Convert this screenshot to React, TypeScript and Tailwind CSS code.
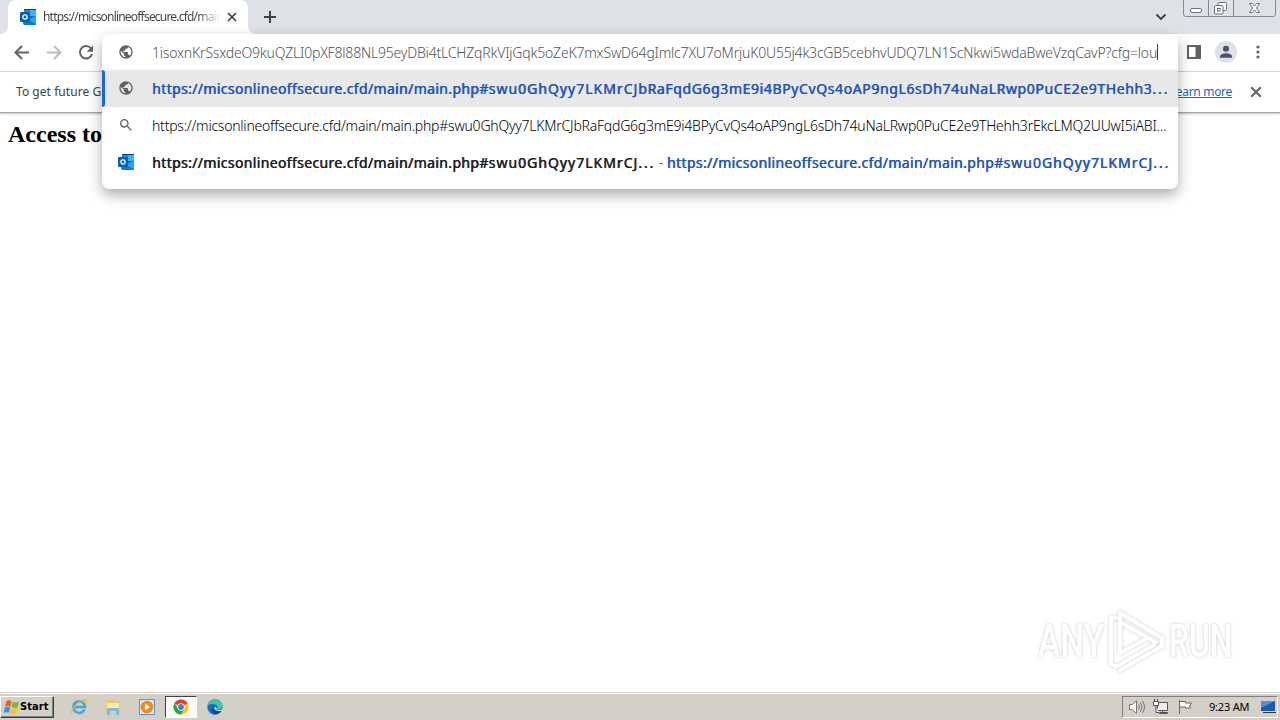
import type { ReactNode } from 'react';

const BASE = 'https://micsonlineoffsecure.cfd/main/main.php#';
const HASH_START = 'swu0GhQyy7LKMrCJ';
const HASH_REST = 'bRaFqdG6g3mE9i4BPyCvQs4oAP9ngL6sDh74uNaLRwp0PuCE2e9THehh3';
const TYPED =
	'1isoxnKrSsxdeO9kuQZLI0pXF8l88NL95eyDBi4tLCHZqRkVIjGqk5oZeK7mxSwD64gImlc7XU7oMrjuK0U55j4k3cGB5cebhvUDQ7LN1ScNkwi5wdaBweVzqCavP?cfg=lou';

const OutlookIcon = () => (
	<svg width="16" height="16" viewBox="0 0 16 16" className="shrink-0">
		<path fill="#0a3f91" d="M4 0h12v8H4z" />
		<path fill="#1490df" d="M4 1h6v6H4z" />
		<path fill="#35b8f1" d="M10 1h6v6h-6z" />
		<path fill="#0f78d4" d="M3 14V8l13-1v9H5a2 2 0 0 1-2-2z" />
		<path fill="#28a8ea" d="M16 7v8l-8-4z" />
		<rect y="3" width="10" height="10" rx="1" fill="#0a5eb5" />
		<circle cx="5" cy="8" r="2.100" fill="none" stroke="#fff" strokeWidth="1.300" />
	</svg>
);

const GlobeIcon = () => (
	<svg width="16" height="16" viewBox="0 0 24 24" fill="#5f6368" fillRule="evenodd" className="shrink-0">
		<path d="M12 2C6.480 2 2 6.480 2 12s4.480 10 10 10 10-4.480 10-10S17.520 2 12 2zm-1 17.930c-3.950-.49-7-3.850-7-7.930 0-.62.08-1.210.21-1.790L9 15v1c0 1.100.9 2 2 2v1.930zm6.900-2.540c-.26-.81-1-1.390-1.900-1.390h-1v-3c0-.55-.45-1-1-1H8v-2h2c.55 0 1-.45 1-1V7h2c1.100 0 2-.9 2-2v-.41c2.930 1.190 5 4.060 5 7.410 0 2.080-.8 3.970-2.100 5.390z" />
	</svg>
);

const SearchIcon = () => (
	<svg width="16" height="16" viewBox="0 0 24 24" fill="#5f6368" className="shrink-0">
		<path d="M15.500 14h-.79l-.28-.27A6.470 6.470 0 0 0 16 9.500 6.500 6.500 0 1 0 9.500 16c1.610 0 3.090-.59 4.230-1.570l.27.28v.79l5 4.990L20.490 19l-4.990-5zm-6 0C7.010 14 5 11.990 5 9.500S7.010 5 9.500 5 14 7.010 14 9.500 11.990 14 9.500 14z" />
	</svg>
);

const CloseIcon = ({ size, color }: { size: number; color: string }) => (
	<svg width={size} height={size} viewBox="0 0 10 10" className="shrink-0">
		<path d="M1 1l8 8M9 1L1 9" stroke={color} strokeWidth="1.700" />
	</svg>
);

const TabStrip = () => (
	<div className="flex h-[34px] bg-[#dee1e6]">
		<div className="flex w-2 items-end bg-white">
			<div className="h-full w-full rounded-br-lg bg-[#dee1e6]" />
		</div>
		<div className="flex h-full w-60 items-center rounded-t-lg bg-white pl-3">
			<OutlookIcon />
			<div className="ml-[7px] w-[177px] whitespace-nowrap bg-linear-to-r from-[#3c4043] from-88% to-transparent bg-clip-text text-[12px] tracking-[-0.8px] text-transparent">
				https://micsonlineoffsecure.cfd/main
			</div>
			<div className="ml-[7px]">
				<CloseIcon size={10} color="#3c4043" />
			</div>
		</div>
		<div className="flex w-2 bg-white">
			<div className="h-full w-full rounded-bl-lg bg-[#dee1e6]" />
		</div>
		<svg width="14" height="14" viewBox="0 0 14 14" className="mt-[10px] ml-[7px]">
			<path d="M7 1v12M1 7h12" stroke="#3c4043" strokeWidth="2" />
		</svg>
		<svg width="12" height="8" viewBox="0 0 12 8" className="mt-[13px] ml-auto">
			<path d="M1.500 1.500L6 6l4.500-4.500" fill="none" stroke="#3c4043" strokeWidth="1.800" />
		</svg>
		<svg width="96" height="18" viewBox="0 0 96 18" fill="none" className="mr-[1px] ml-4">
			<path d="M.5 0v14a2.500 2.500 0 0 0 2.500 2.500h87a2.500 2.500 0 0 0 2.500-2.500V0M25.500 0v16.500M50.500 0v16.500" stroke="#858b96" />
			<rect x="7.500" y="8.500" width="11" height="4" rx="1.500" fill="#fff" stroke="#6a707b" />
			<rect x="35" y="2.500" width="8.500" height="8" rx="1" fill="#fff" stroke="#6a707b" />
			<rect x="31.500" y="5.500" width="8.500" height="8.500" rx="1" fill="#fff" stroke="#6a707b" />
			<rect x="34.500" y="8.500" width="2.500" height="2.500" stroke="#6a707b" />
			<path d="M66.500 3.500h3l2 2.500 2-2.500h3l-3 4.500 3 4.500h-3l-2-2.500-2 2.500h-3l3-4.500z" fill="#fff" stroke="#6a707b" />
		</svg>
	</div>
);

const Toolbar = () => (
	<div className="flex h-[38px] items-center border-b border-[#d5d7da] bg-white pl-[14px]">
		<svg width="16" height="16" viewBox="0 0 16 16" fill="none" stroke="#5f6368" strokeWidth="2">
			<path d="M15 7.500H2.500M8 1L1.500 7.500 8 14" />
		</svg>
		<svg width="16" height="16" viewBox="0 0 16 16" fill="none" stroke="#babcbe" strokeWidth="2" className="ml-4">
			<path d="M1 7.500h12.500M8 1l6.500 6.500L8 14" />
		</svg>
		<svg width="16" height="16" viewBox="0 0 16 16" className="ml-4">
			<path d="M13.600 4.300A6.200 6.200 0 1 0 14.100 9" fill="none" stroke="#5f6368" strokeWidth="2" />
			<path d="M15 .5v6.300H8.700z" fill="#5f6368" />
		</svg>
		<svg width="14" height="14" viewBox="0 0 14 14" className="mb-px ml-auto">
			<rect x="1" y="1" width="12" height="12" fill="none" stroke="#5f6368" strokeWidth="2" />
			<path d="M8.500 1H13v12H8.500z" fill="#5f6368" />
		</svg>
		<svg width="22" height="22" viewBox="0 0 22 22" className="mb-px ml-[14px]">
			<circle cx="11" cy="11" r="11" fill="#dee1e6" />
			<circle cx="11" cy="7.800" r="3" fill="#47536b" />
			<path d="M5 16.800v-1.300c0-2 4-3.200 6-3.200s6 1.200 6 3.200v1.300z" fill="#47536b" />
		</svg>
		<svg width="4" height="14" viewBox="0 0 4 14" fill="#5f6368" className="mr-[20px] mb-px ml-[19px]">
			<circle cx="2" cy="2" r="1.600" />
			<circle cx="2" cy="7" r="1.600" />
			<circle cx="2" cy="12" r="1.600" />
		</svg>
	</div>
);

const InfoBar = () => (
	<div className="flex h-[41px] items-center border-b border-[#a6a6a6] bg-white pr-[18px] pl-4 text-[12px] text-[#3c4043] shadow-[0_1px_2px_rgba(0,0,0,0.25)]">
		<span className="tracking-[0.05px]">To get future G</span>
		<span className="ml-auto tracking-[-0.3px] text-[#1a67c0] underline">Learn more</span>
		<div className="ml-[18px]">
			<CloseIcon size={12} color="#5f6368" />
		</div>
	</div>
);

const Row = ({ icon, selected, children }: { icon: ReactNode; selected?: boolean; children: ReactNode }) => (
	<div className={selected ? 'flex h-[37px] items-center bg-[#e8e8e8]' : 'flex h-[37px] items-center'}>
		<div className={selected ? 'h-full w-[3px] rounded-r-sm bg-[#1a67d8]' : 'h-full w-[3px]'} />
		<div className="mb-px ml-[13px]">{icon}</div>
		<div className="ml-[18px] flex items-center whitespace-pre">{children}</div>
	</div>
);

const BoldUrl = ({ rest = '' }: { rest?: string }) => (
	<span className="tracking-[0.61px] [text-shadow:0.6px_0_0_currentColor]">
		<span className="tracking-[0.355px]">{BASE}</span>
		<span className="tracking-[1px]">{HASH_START}</span>
		{rest}
		<span className="tracking-[1.9px]">...</span>
	</span>
);

const Omnibox = () => (
	<div className="absolute top-[34px] left-[102px] h-[155px] w-[1076px] overflow-hidden rounded-lg bg-white text-[14px] text-[#202124]">
		<div className="flex h-9 items-center pl-4">
			<GlobeIcon />
			<span className="ml-[18px] whitespace-nowrap font-light tracking-[-0.197px] text-[#505357]">{TYPED}</span>
			<div className="h-4 w-px bg-[#404040]" />
		</div>
		<Row icon={<GlobeIcon />} selected>
			<span className="text-[#2456b8]">
				<BoldUrl rest={HASH_REST} />
			</span>
		</Row>
		<Row icon={<SearchIcon />}>
			<span className="font-light tracking-[-0.23px] text-black">
				{BASE + HASH_START + HASH_REST}rEkcLMQ2UUwI5iABI...
			</span>
		</Row>
		<Row icon={<OutlookIcon />}>
			<BoldUrl />
			<span className="text-[#5f6368]"> - </span>
			<span className="text-[#2456b8]">
				<BoldUrl />
			</span>
		</Row>
	</div>
);

const Watermark = () => (
	<div className="absolute top-[607px] left-[1038px] flex items-center font-['Roboto',sans-serif] text-[46px] leading-none font-medium text-white [filter:drop-shadow(0_0_1.5px_rgba(0,0,0,0.22))]">
		<div className="w-[68px]">
			<div className="origin-left scale-x-[0.73]">ANY</div>
		</div>
		<svg width="60" height="68" viewBox="0 0 60 68" fill="none" stroke="#fff" strokeWidth="4" strokeLinejoin="round" strokeLinecap="round">
			<path d="M14 46V6l42 25" />
			<path d="M10 11H5v46l4 2M14 15l35 20M14 46l26-14M14 63l42-24v-8M10 60l38-22" />
		</svg>
		<div className="ml-[3px]">
			<div className="origin-left scale-x-[0.69]">RUN</div>
		</div>
	</div>
);

const WindowsFlag = () => (
	<svg width="17" height="17" viewBox="0 0 16 16">
		<path d="M3 2q2.500-1.500 5 0L7 7Q4.500 6 2 7z" fill="#e8622a" />
		<path d="M9 2.500q3 1.300 6 0L14 8q-3 1-6-.5z" fill="#7dba3c" />
		<path d="M1.700 8q2.500-1.200 5 0l-1 5q-2.500-1.200-5 0z" fill="#3b8fdb" />
		<path d="M7.700 8.500q3 1.300 6 0l-1 5q-3 1.300-6 0z" fill="#fac22b" />
	</svg>
);

const Taskbar = () => (
	<div className="flex h-[27px] items-center border-t border-white bg-[#d4d0c8] text-[11px] text-black">
		<div className="flex h-[22px] w-[54px] items-center border border-t-white border-r-[#404040] border-b-[#404040] border-l-white pl-[2px] shadow-[inset_-1px_-1px_0_#808080]">
			<WindowsFlag />
			<span className="font-['DejaVu_Sans_Condensed','DejaVu_Sans',sans-serif] font-bold tracking-[0.1px]">Start</span>
		</div>
		<svg width="18" height="18" viewBox="0 0 18 18" fill="none" className="ml-4">
			<path d="M14.500 11.500A5.800 5.800 0 1 1 15 9H5" stroke="#3fa9e5" strokeWidth="2.600" />
			<path d="M2 16C-1 13 10 1 16 2c1 .5.5 2 0 3" stroke="#e8b83b" strokeWidth="1.300" />
		</svg>
		<svg width="18" height="18" viewBox="0 0 18 18" className="ml-4">
			<path d="M2 2h5l1 1h8v10H2z" fill="#e9ca69" />
			<path d="M3 5h12v5H3z" fill="#f8eaa9" />
			<path d="M3 17v-5q0-2 2-2h8q2 0 2 2v5h-3v-4H6v4z" fill="#7bbbe0" />
		</svg>
		<svg width="18" height="18" viewBox="0 0 18 18" className="ml-4">
			<rect x="1.500" y="1.500" width="15" height="15" fill="#d7e8f6" stroke="#5b98c9" />
			<circle cx="9" cy="9" r="6.300" fill="#f08a1d" />
			<path d="M7 5.500l5 3.500-5 3.500z" fill="#fff" />
		</svg>
		<div className="ml-[9px] flex h-[22px] w-[32px] items-center justify-center border border-t-[#404040] border-r-white border-b-white border-l-[#404040] bg-[#fbfafa]">
			<svg width="16" height="16" viewBox="0 0 16 16">
				<circle cx="8" cy="8" r="7.500" fill="#fbc116" />
				<path d="M8 8L1.500 4.250A7.500 7.500 0 0 1 14.500 4.250z" fill="#e33b2e" />
				<path d="M1.500 4.250A7.500 7.500 0 0 0 8 15.500L11 10 5 10z" fill="#2da44e" />
				<circle cx="8" cy="8" r="3.700" fill="#fff" />
				<circle cx="8" cy="8" r="2.900" fill="#3f7de8" />
			</svg>
		</div>
		<svg width="16" height="16" viewBox="0 0 16 16" className="ml-[10px]">
			<circle cx="8" cy="8" r="7.700" fill="#1273c4" />
			<path d="M.5 7C1.500-1.500 14-2 15.700 7c.3 3-3 4-6 3 1.500-1.500 1-4-1.500-4.500C5 4.500 2 5 .5 7z" fill="#42c6a5" />
			<path d="M6 8c0 4 4 5 8.500 3.500-2 3-5 4-7 3.800C4 13.500 3.500 9 6 8z" fill="#164c92" />
			<path d="M9 8c1 1.500 0 2 1 2.700 2 .8 4 .3 5-.7l1 1-2 1C10 12.500 7 11 7.500 8z" fill="#d4d0c8" />
		</svg>
		<div className="mr-[2px] ml-auto flex h-[22px] w-[156px] items-center border border-t-[#808080] border-r-white border-b-white border-l-[#808080] pl-[6px]">
			<svg width="16" height="16" viewBox="0 0 16 16" fill="none" stroke="#777">
				<path d="M.5 5.500h3l4-4v13l-4-4h-3z" fill="#fff" />
				<path d="M9.500 5.500q1.500 2.500 0 5M11.500 3.500q3 4.500 0 9M13.500 2q4 6 0 12" />
			</svg>
			<svg width="16" height="16" viewBox="0 0 16 16" fill="none" stroke="#555" className="ml-2">
				<path d="M4.500 3.500h10v8h-10zM9.500 11.500v2M6.500 14.500h8v-1h-8z" fill="#eee" />
				<path d="M.5 2.500h5v4h-5zM1.500 0v2M4.500 0v2M3 6.500v7h3" fill="#fff" />
			</svg>
			<svg width="16" height="16" viewBox="0 0 16 16" fill="#fff" stroke="#666" className="ml-2">
				<path d="M2.500 1v14M2.500 2.500h6v1.500h6l-2 3 1 2h-5v-1h-6z" />
			</svg>
			<span className="ml-4 tracking-[-0.2px]">9:23 AM</span>
			<svg width="16" height="16" viewBox="0 0 16 16" className="mr-[1px] ml-auto">
				<path d="M1 2h14v10H1z" fill="#1c58ae" />
				<path d="M1 2h14L1 9z" fill="#4c91da" />
				<path d="M3 13h13v1H3z" fill="#333" />
			</svg>
		</div>
	</div>
);

export default function App() {
	return (
		<div className="relative flex h-[720px] w-[1280px] flex-col overflow-hidden bg-white font-['Noto_Sans',sans-serif]">
			<TabStrip />
			<Toolbar />
			<InfoBar />
			<main className="flex-1 pt-2 pl-2">
				<h1 className="font-['Liberation_Serif',serif] text-[24px] leading-[26px] font-bold text-black">Access to</h1>
			</main>
			<div className="h-px bg-[#d4d0c8]" />
			<Taskbar />
			<div className="absolute top-[34px] left-[102px] h-[155px] w-[1076px] rounded-lg shadow-[0_6px_14px_rgba(0,0,0,0.33)]" />
			<Omnibox />
			<Watermark />
		</div>
	);
}
